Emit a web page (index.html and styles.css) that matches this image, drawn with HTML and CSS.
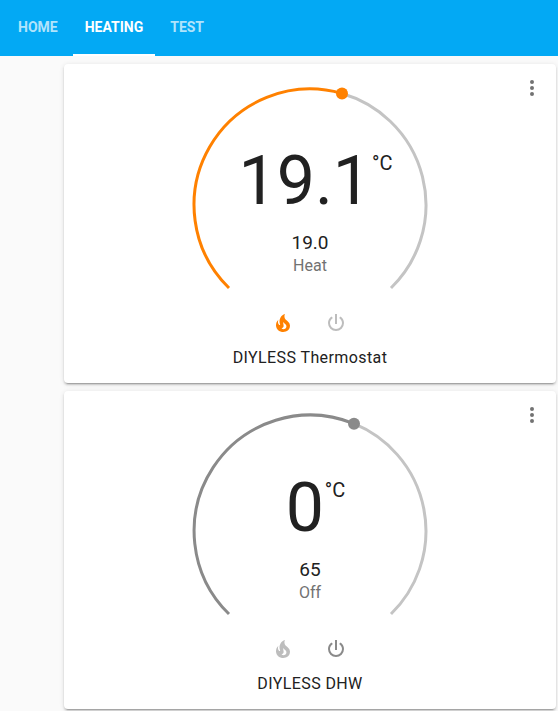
FILE: index.html
```html
<!DOCTYPE html>
<html lang="en">
<head>
  <meta charset="UTF-8">
  <title>Heating</title>
  <link rel="stylesheet" href="styles.css">
</head>
<body>

<header class="toolbar">
  <nav class="tabs">
    <a class="tab">HOME</a>
    <a class="tab active">HEATING</a>
    <a class="tab">TEST</a>
  </nav>
</header>

<main class="view">
  <section class="card">
    <svg class="menu" viewBox="0 0 24 24"><path d="M12,16A2,2 0 0,1 14,18A2,2 0 0,1 12,20A2,2 0 0,1 10,18A2,2 0 0,1 12,16M12,10A2,2 0 0,1 14,12A2,2 0 0,1 12,14A2,2 0 0,1 10,12A2,2 0 0,1 12,10M12,4A2,2 0 0,1 14,6A2,2 0 0,1 12,8A2,2 0 0,1 10,6A2,2 0 0,1 12,4Z"/></svg>
    <div class="gauge">
      <svg class="dial" viewBox="0 0 240 226">
        <path class="track" d="M152 8.5A116 116 0 0 1 201 203"/>
        <path class="bar heat" d="M39 203A116 116 0 0 1 152 8.5"/>
        <circle class="knob heat" cx="152" cy="8.5" r="6"/>
      </svg>
      <div class="readout">
        <div class="current"><span>19.1</span><span class="unit">°C</span></div>
        <div class="target">19.0</div>
        <div class="mode">Heat</div>
      </div>
    </div>
    <div class="modes">
      <svg class="icon heat" viewBox="0 0 24 24"><path d="M17.66 11.2C17.43 10.9 17.15 10.64 16.89 10.38C16.22 9.78 15.46 9.35 14.82 8.72C13.33 7.26 13 4.85 13.95 3C13 3.23 12.17 3.75 11.46 4.32C8.87 6.4 7.85 10.07 9.07 13.22C9.11 13.32 9.15 13.42 9.15 13.55C9.15 13.77 9 13.97 8.8 14.05C8.57 14.15 8.33 14.09 8.14 13.93C8.08 13.88 8.04 13.83 8 13.76C6.87 12.33 6.69 10.28 7.45 8.64C5.78 10 4.87 12.3 5 14.47C5.06 14.97 5.12 15.47 5.29 15.97C5.43 16.57 5.7 17.17 6 17.7C7.08 19.43 8.95 20.67 10.96 20.92C13.1 21.19 15.39 20.8 17.03 19.32C18.86 17.66 19.5 15 18.56 12.72L18.43 12.46C18.22 12 17.66 11.2 17.66 11.2M14.5 17.5C14.22 17.74 13.76 18 13.4 18.1C12.28 18.5 11.16 17.94 10.5 17.28C11.69 17 12.4 16.12 12.61 15.23C12.78 14.43 12.46 13.77 12.33 13C12.21 12.26 12.23 11.63 12.5 10.94C12.69 11.32 12.89 11.7 13.13 12C13.9 13 15.11 13.44 15.37 14.8C15.41 14.94 15.43 15.08 15.43 15.23C15.46 16.05 15.1 16.95 14.5 17.5H14.5Z"/></svg>
      <svg class="icon idle" viewBox="0 0 24 24"><path d="M16.56,5.44L15.11,6.89C16.84,7.94 18,9.83 18,12A6,6 0 0,1 12,18A6,6 0 0,1 6,12C6,9.82 7.16,7.93 8.88,6.88L7.44,5.44C5.36,6.88 4,9.28 4,12A8,8 0 0,0 12,20A8,8 0 0,0 20,12C20,9.28 18.64,6.88 16.56,5.44M13,3H11V13H13V3Z"/></svg>
    </div>
    <div class="name">DIYLESS Thermostat</div>
  </section>

  <section class="card">
    <svg class="menu" viewBox="0 0 24 24"><path d="M12,16A2,2 0 0,1 14,18A2,2 0 0,1 12,20A2,2 0 0,1 10,18A2,2 0 0,1 12,16M12,10A2,2 0 0,1 14,12A2,2 0 0,1 12,14A2,2 0 0,1 10,12A2,2 0 0,1 12,10M12,4A2,2 0 0,1 14,6A2,2 0 0,1 12,8A2,2 0 0,1 10,6A2,2 0 0,1 12,4Z"/></svg>
    <div class="gauge">
      <svg class="dial" viewBox="0 0 240 226">
        <path class="track" d="M164 12.7A116 116 0 0 1 201 203"/>
        <path class="bar off" d="M39 203A116 116 0 0 1 164 12.7"/>
        <circle class="knob off" cx="164" cy="12.7" r="6"/>
      </svg>
      <div class="readout">
        <div class="current"><span>0</span><span class="unit">°C</span></div>
        <div class="target">65</div>
        <div class="mode">Off</div>
      </div>
    </div>
    <div class="modes">
      <svg class="icon idle" viewBox="0 0 24 24"><path d="M17.66 11.2C17.43 10.9 17.15 10.64 16.89 10.38C16.22 9.78 15.46 9.35 14.82 8.72C13.33 7.26 13 4.85 13.95 3C13 3.23 12.17 3.75 11.46 4.32C8.87 6.4 7.85 10.07 9.07 13.22C9.11 13.32 9.15 13.42 9.15 13.55C9.15 13.77 9 13.97 8.8 14.05C8.57 14.15 8.33 14.09 8.14 13.93C8.08 13.88 8.04 13.83 8 13.76C6.87 12.33 6.69 10.28 7.45 8.64C5.78 10 4.87 12.3 5 14.47C5.06 14.97 5.12 15.47 5.29 15.97C5.43 16.57 5.7 17.17 6 17.7C7.08 19.43 8.95 20.67 10.96 20.92C13.1 21.19 15.39 20.8 17.03 19.32C18.86 17.66 19.5 15 18.56 12.72L18.43 12.46C18.22 12 17.66 11.2 17.66 11.2M14.5 17.5C14.22 17.74 13.76 18 13.4 18.1C12.28 18.5 11.16 17.94 10.5 17.28C11.69 17 12.4 16.12 12.61 15.23C12.78 14.43 12.46 13.77 12.33 13C12.21 12.26 12.23 11.63 12.5 10.94C12.69 11.32 12.89 11.7 13.13 12C13.9 13 15.11 13.44 15.37 14.8C15.41 14.94 15.43 15.08 15.43 15.23C15.46 16.05 15.1 16.95 14.5 17.5H14.5Z"/></svg>
      <svg class="icon off" viewBox="0 0 24 24"><path d="M16.56,5.44L15.11,6.89C16.84,7.94 18,9.83 18,12A6,6 0 0,1 12,18A6,6 0 0,1 6,12C6,9.82 7.16,7.93 8.88,6.88L7.44,5.44C5.36,6.88 4,9.28 4,12A8,8 0 0,0 12,20A8,8 0 0,0 20,12C20,9.28 18.64,6.88 16.56,5.44M13,3H11V13H13V3Z"/></svg>
    </div>
    <div class="name">DIYLESS DHW</div>
  </section>
</main>

</body>
</html>
```

FILE: styles.css
```css
body {
  margin: 0;
  height: 711px;
  overflow: hidden;
  font-family: Roboto, sans-serif;
  color: #212121;
  background-color: #fafafa;
}
.toolbar {
  height: 56px;
  background-color: #03a9f4;
}
.tabs {
  display: flex;
  gap: 3px;
  height: 56px;
  padding-left: 6px;
}
.tab {
  padding: 0 12px;
  line-height: 55px;
  font-size: 14px;
  font-weight: 700;
  color: rgba(255, 255, 255, 0.7);
}
.tab.active {
  color: #fff;
  box-shadow: inset 0 -2px 0 #fff;
}
.view {
  display: flex;
  flex-direction: column;
  gap: 8px;
  padding: 8px 2px 0 64px;
}
.card {
  position: relative;
  height: 319px;
  background-color: #fff;
  border-radius: 4px;
  box-shadow: 0 2px 2px 0 rgba(0, 0, 0, 0.14), 0 1px 5px 0 rgba(0, 0, 0, 0.12), 0 3px 1px -2px rgba(0, 0, 0, 0.2);
}
.card + .card {
  height: 318px;
}
.menu {
  position: absolute;
  top: 12px;
  right: 12px;
  width: 24px;
  height: 24px;
  fill: #727272;
}
.gauge {
  position: relative;
  width: 240px;
  height: 226px;
  margin: 0 auto;
  padding-top: 21px;
}
.card + .card .gauge {
  padding-top: 20px;
}
.dial {
  display: block;
  width: 240px;
  height: 226px;
  fill: none;
}
.track,
.bar {
  fill: none;
  stroke-width: 3;
}
.track {
  stroke: #c4c4c4;
}
.bar.heat {
  stroke: #ff8100;
}
.bar.off {
  stroke: #8a8a8a;
}
.knob.heat {
  fill: #ff8100;
}
.knob.off {
  fill: #8a8a8a;
}
.readout {
  position: absolute;
  top: 77px;
  left: 0;
  right: 0;
  display: flex;
  flex-direction: column;
  align-items: center;
}
.current {
  display: flex;
  align-items: flex-start;
  padding-left: 11px;
  font-size: 68px;
  line-height: 80px;
}
.unit {
  margin: 10px 0 0 1px;
  font-size: 20px;
  line-height: 24px;
}
.target {
  margin-top: 10px;
  font-size: 19px;
  line-height: 24px;
}
.mode {
  font-size: 16px;
  line-height: 22px;
  color: #727272;
}
.modes {
  display: flex;
  justify-content: center;
  gap: 29px;
  padding-right: 1px;
}
.icon {
  width: 24px;
  height: 24px;
}
.icon.heat {
  fill: #ff8100;
}
.icon.idle {
  fill: #bdbdbd;
}
.icon.off {
  fill: #8a8a8a;
}
.name {
  margin-top: 11px;
  font-size: 16px;
  line-height: 24px;
  letter-spacing: 0.4px;
  text-align: center;
}
```
